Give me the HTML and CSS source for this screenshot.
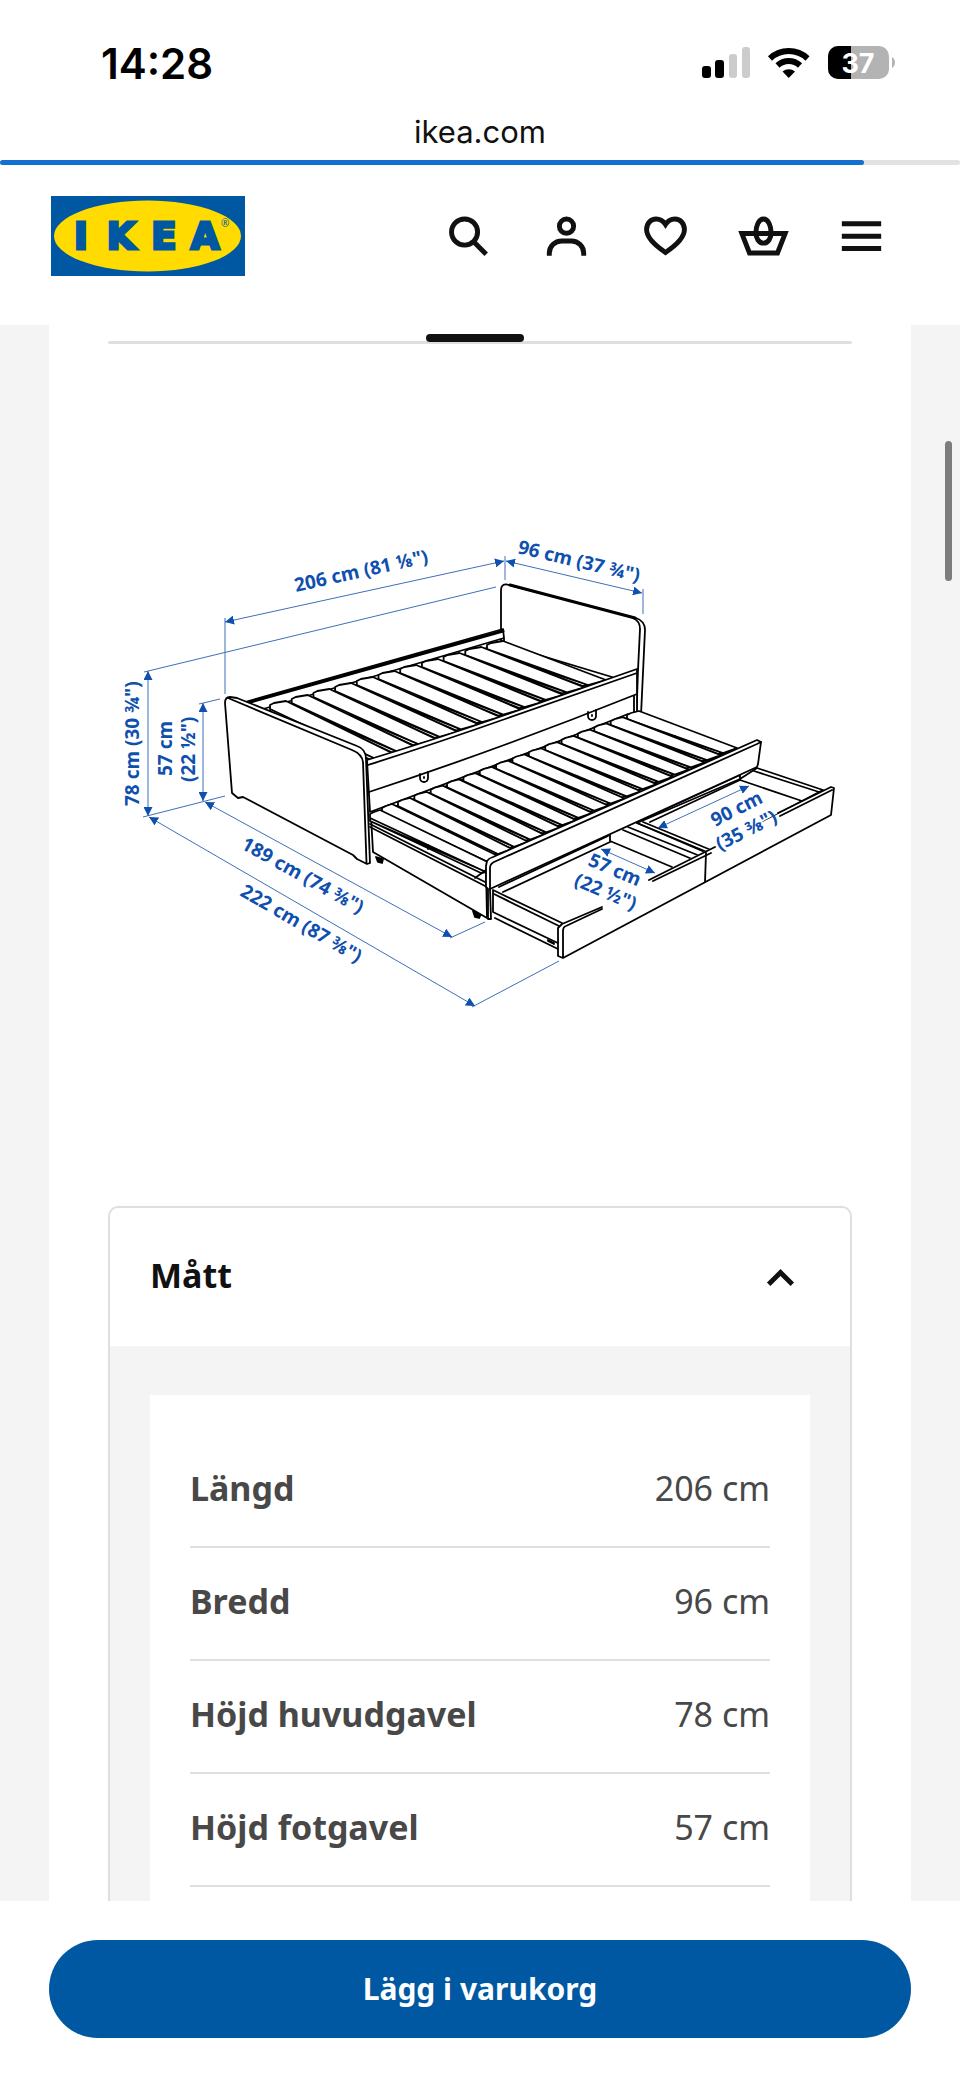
FILE: index.html
```html
<!DOCTYPE html>
<html lang="sv">

<head>
    <meta charset="UTF-8">
    <meta name="viewport" content="width=device-width, initial-scale=1.0">
    <title>IKEA - Mått</title>
    <link rel="stylesheet" href="styles.css">
</head>

<body>
    <div class="status">
        <span class="time">14:28</span>
        <svg class="status-icons" width="196" height="40" viewBox="700 44 196 40" aria-hidden="true">
            <rect x="702" y="67" width="9" height="12" rx="3" />
            <rect x="715" y="61" width="9" height="18" rx="3" />
            <rect x="729" y="55" width="8" height="24" rx="3" fill="#ccc" />
            <rect x="742" y="48" width="8" height="31" rx="3" fill="#ccc" />
            <g fill="none" stroke="#000" stroke-width="6">
                <path d="M770 59.500a27.500 27.500 0 0 1 37.500 0" />
                <path d="M777.500 66.500a16.500 16.500 0 0 1 22.500 0" />
            </g>
            <path d="M782.500 72.500a9.500 9.500 0 0 1 12.500 0l-6.300 6.500z" />
            <rect x="828" y="47" width="61" height="33" rx="10" fill="#b3b3b3" />
            <path d="M851 47h-13a10 10 0 0 0-10 10v13a10 10 0 0 0 10 10h13z" />
            <path d="M892 58q3 2 3 5.500t-3 5.500z" fill="#b3b3b3" />
            <text class="battery" x="858" y="74" text-anchor="middle">37</text>
        </svg>
    </div>
    <div class="url">ikea.com</div>
    <div class="progress"><div class="progress-bar"></div></div>

    <header class="header">
        <a href="#" class="logo" aria-label="IKEA">
            <svg width="194" height="80" viewBox="51 196 194 80">
                <rect x="51" y="196" width="194" height="80" fill="#0058a3" />
                <ellipse cx="147.500" cy="236" rx="93.500" ry="35.500" fill="#ffdb00" />
                <g class="logo-text" text-anchor="middle">
                    <text x="81" y="249">I</text>
                    <text x="121" y="249">K</text>
                    <text x="164" y="249">E</text>
                    <text x="205" y="249">A</text>
                </g>
                <text class="logo-reg" x="221" y="227">®</text>
            </svg>
        </a>
        <nav class="nav">
            <button type="button" aria-label="Sök">
                <svg class="icon" viewBox="0 0 24 24"><circle cx="10.400" cy="10.200" r="5.300" /><path d="M14 14l5.200 5.200" /></svg>
            </button>
            <button type="button" aria-label="Logga in">
                <svg class="icon" viewBox="0 0 24 24"><circle cx="12" cy="7.800" r="2.900" /><path d="M5 19.800v-1a5 5 0 0 1 5-5h4a5 5 0 0 1 5 5v1" /></svg>
            </button>
            <button type="button" aria-label="Favoriter">
                <svg class="icon" viewBox="0 0 24 24"><path d="M12 18.500c-3-2-7.700-5.400-7.700-9.300 0-2.500 1.700-4.300 3.900-4.300 1.600 0 2.900.8 3.800 2.200.9-1.400 2.200-2.200 3.800-2.200 2.200 0 3.900 1.800 3.900 4.300 0 3.900-4.700 7.300-7.700 9.300z" /></svg>
            </button>
            <button type="button" aria-label="Varukorg">
                <svg class="icon" viewBox="0 0 24 24"><path d="M3.200 10.800h17.600l-3.100 7.900H6.300z" /><path d="M12 4.900c2 0 3.100 3 3.100 5.600 0 2.200-1.200 4.200-3.100 4.200s-3.100-2-3.100-4.200c0-2.600 1.100-5.600 3.100-5.600z" /></svg>
            </button>
            <button type="button" aria-label="Meny">
                <svg class="icon" viewBox="0 0 24 24"><path d="M4 6.800h16M4 11.900h16M4 16.900h16" /></svg>
            </button>
        </nav>
    </header>

    <main class="main">
        <div class="product">
            <div class="slider"><div class="slider-thumb"></div></div>

            <svg class="drawing" viewBox="108 344 744 862" role="img" aria-label="Måttskiss">
                <defs>
                    <marker id="arrow" viewBox="0 0 8 8" refX="8" refY="4" markerWidth="9" markerHeight="9" markerUnits="userSpaceOnUse" orient="auto-start-reverse">
                        <path d="M0 0L8 4L0 8z" />
                    </marker>
                </defs>

                <g class="bed">
                    <!-- headboard and back rail -->
                    <path d="M501 646V590q0-6 6-5.500L636 618q9 3 9 12L641 715H501z" />
                    <path class="thick" d="M510 585L635 618" />
                    <path class="open" d="M633 618q7 3 7 11L638 670L636.500 714" />
                    <path d="M245 702L503 629L504 638L263 709z" />
                    <path class="thick" d="M247 703L503 631" />
                    <path class="open" d="M504 639V643L268 711M502 644L612 677" />
                    <g id="topSlats"></g>
                    <!-- front rail -->
                    <path d="M367 760Q440 738 508 714L637 669V712L370 812z" />
                    <path class="open" d="M368 765Q440 742 508 718L637 673M369 792Q500 749 637 694M634 696V713" />
                    <path class="open" d="M420 774v4a4 4 0 0 0 8 0v-6M588 712v4a4 4 0 0 0 8 0v-6M424 777v1M592 715v1" />
                    <!-- trundle bed -->
                    <path class="solid" d="M376 857l2 5 4 1 1-4zM473 911l2 6 4 1 2-4z" />
                    <path d="M371 816L628 714L735 748L486 868L487 918L373 852z" />
                    <g id="lowSlats"></g>
                    <path class="open" d="M486 870L475 878M370 824L487 883M370 827L487 887" />
                    <!-- drawers behind the trundle front -->
                    <path d="M757 768L823 790L802 801L707 853L637 823L740 779z" />
                    <path class="open" d="M754 771L819 792M740 772V780L802 801M740 780L650 822M740 775L642 820M637 823L707 852M643 822L711 850M628 827L700 856M623 830L692 859M610 835V841L672 867M610 842L503 892M608 836L499 887" />
                    <path d="M493 890L562 923V945L493 912z" />
                    <path class="open" d="M494 894L559 926M495 918L558 949" />
                    <path class="solid" d="M548 940l6 3v1l-6-3z" />
                    <path d="M487 861q2-3 6-4L757 740L761 742L758 764L757 767L490 889L491 919L488 919L488 889L486 887V866z" />
                    <path class="open" d="M490 889L490 868q0-4 4-6L757 744L761 742" />
                    <!-- drawer fronts -->
                    <path class="face" d="M558 927L562 924L831 787L834 788L831 815L563 958L559 957z" />
                    <path class="open" d="M602 907L562 924L558 928V956L563 958L831 815L834 788L831 787L778 813M602 909L566 926q-3 1-3 5V958M649 880L715 847M653 881L711 853M706 853L705 882M780 816L832 790" />
                    <!-- footboard -->
                    <path d="M225 703q0-6 5-6l7 1L357 746q9 3 9 13L370 863L367 864L357 859L353 855L243 797L238 798L232 793z" />
                    <path class="open" d="M228 698L352 750q10 4 11 12L366.500 863" />
                </g>

                <g class="lines">
                    <path d="M225 618V694M505 556V580M643 589V614M144 672L496 587M199 704L220 699M143 817L225 796M450 938L485 922M472 1007L559 961" />
                    <g marker-start="url(#arrow)" marker-end="url(#arrow)">
                        <path d="M225 622L504 561" />
                        <path d="M506 561L642 593" />
                        <path d="M148 671V816" />
                        <path d="M203 703V801" />
                        <path d="M205 802L452 937" />
                        <path d="M149 817L475 1006" />
                        <path d="M658 828L749 786" />
                        <path d="M601 849L655 873" />
                    </g>
                </g>

                <g class="labels">
                    <text transform="translate(296 592) rotate(-12.500)">206 cm (81 ⅛")</text>
                    <text transform="translate(517 553) rotate(13.500)">96 cm (37 ¾")</text>
                    <text transform="translate(139 806) rotate(-90)">78 cm (30 ¾")</text>
                    <text transform="translate(172 776) rotate(-90)">57 cm</text>
                    <text transform="translate(195 782) rotate(-90)">(22 ½")</text>
                    <text transform="translate(240 848) rotate(29)">189 cm (74 ⅜")</text>
                    <text transform="translate(239 895) rotate(30)">222 cm (87 ⅜")</text>
                    <text transform="translate(715 827) rotate(-27)">90 cm</text>
                    <text transform="translate(720 851) rotate(-27)">(35 ⅜")</text>
                    <text transform="translate(587 865) rotate(23)">57 cm</text>
                    <text transform="translate(573 885) rotate(23)">(22 ½")</text>
                </g>
            </svg>

            <section class="card">
                <button type="button" class="card-header" aria-expanded="true">
                    <span>Mått</span>
                    <svg class="icon" viewBox="0 0 24 24"><path d="M7.200 16L12 11.200l4.800 4.800" /></svg>
                </button>
                <div class="card-body">
                    <div class="card-inner">
                        <table class="sizes">
                            <tr><th scope="row">Längd</th><td>206 cm</td></tr>
                            <tr><th scope="row">Bredd</th><td>96 cm</td></tr>
                            <tr><th scope="row">Höjd huvudgavel</th><td>78 cm</td></tr>
                            <tr><th scope="row">Höjd fotgavel</th><td>57 cm</td></tr>
                        </table>
                    </div>
                </div>
            </section>
        </div>
        <div class="scroll-thumb"></div>
    </main>

    <footer class="footer">
        <button type="button" class="buy">Lägg i varukorg</button>
    </footer>

    <script src="script.js"></script>
</body>

</html>
```
FILE: styles.css
```css
* {
    box-sizing: border-box;
}

body {
    margin: 0;
    height: 100vh;
    display: flex;
    flex-direction: column;
    background-color: #fff;
    color: #111;
    font-family: "Noto Sans", sans-serif;
}

button {
    padding: 0;
    border: none;
    background: none;
    color: inherit;
    font-family: inherit;
    cursor: pointer;
}

.status {
    display: flex;
    justify-content: space-between;
    align-items: center;
    padding: 38px 64px 0 101px;
    color: #000;
    font-family: Inter, sans-serif;
}

.status-icons {
    margin-bottom: 2px;
}

.time {
    font-size: 42px;
    line-height: 52px;
    font-weight: 600;
}

.battery {
    fill: #fff;
    font-size: 27px;
    font-weight: 700;
}

.url {
    padding: 22px 0 8px;
    text-align: center;
    font-family: Inter, sans-serif;
    font-size: 31px;
    line-height: 40px;
}

.progress {
    height: 5px;
    flex-shrink: 0;
    border-radius: 3px;
    background-color: #e2e2e4;
}

.progress-bar {
    width: 90%;
    height: 5px;
    border-radius: 3px;
    background-color: #156fd0;
}

.header {
    display: flex;
    justify-content: space-between;
    align-items: center;
    padding: 31px 49px 49px 51px;
}

.logo,
.logo svg {
    display: block;
}

.logo-text {
    fill: #0058a3;
    stroke: #0058a3;
    stroke-width: 3;
    font-family: "DejaVu Sans", sans-serif;
    font-size: 37px;
    font-weight: bold;
}

.logo-reg {
    fill: #0058a3;
    font-size: 10px;
}

.nav {
    display: flex;
    width: 492px;
}

.nav button {
    flex: 1;
    display: flex;
    justify-content: center;
}

.icon {
    width: 59px;
    height: 59px;
    fill: none;
    stroke: #111;
    stroke-width: 2;
}

.main {
    position: relative;
    flex: 1;
    min-height: 0;
    overflow: hidden;
    padding: 0 49px;
    background-color: #f4f4f4;
}

.product {
    padding: 16px 59px 0;
    background-color: #fff;
}

.slider {
    position: relative;
    height: 3px;
    border-radius: 2px;
    background-color: #dfdfdf;
}

.slider-thumb {
    position: absolute;
    left: 318px;
    bottom: 2px;
    width: 98px;
    height: 8px;
    border-radius: 4px;
    background-color: #111;
}

.drawing {
    display: block;
    width: 100%;
}

.bed path {
    fill: #fff;
    stroke: #000;
    stroke-width: 1.8;
    stroke-linejoin: round;
    stroke-linecap: round;
}

.bed .open {
    fill: none;
}

.bed .thick {
    fill: none;
    stroke-width: 3;
}

.bed .solid {
    fill: #000;
}

.bed .face {
    stroke: none;
}

.lines path {
    fill: none;
    stroke: #3f6fb8;
    stroke-width: 1;
}

.drawing marker path,
.labels {
    fill: #0f4fae;
}

.labels {
    font-size: 19px;
    font-weight: 700;
}

.card {
    border: 2px solid #dfdfdf;
    border-radius: 10px;
    overflow: hidden;
}

.card-header {
    display: flex;
    justify-content: space-between;
    align-items: center;
    width: 100%;
    padding: 37px 40px 42px;
    font-size: 34px;
    line-height: 46px;
    font-weight: 700;
}

.card-body {
    padding: 49px 40px;
    background-color: #f4f4f4;
}

.card-inner {
    padding: 40px;
    background-color: #fff;
}

.sizes {
    width: 100%;
    border-collapse: collapse;
    color: #484848;
    font-size: 34px;
    line-height: 46px;
}

.sizes th,
.sizes td {
    padding: 30px 0 35px;
    border-bottom: 2px solid #dfdfdf;
    text-align: left;
}

.sizes td {
    text-align: right;
}

.scroll-thumb {
    position: absolute;
    top: 116px;
    right: 8px;
    width: 7px;
    height: 140px;
    border-radius: 4px;
    background-color: #7d7d7d;
}

.footer {
    padding: 39px 49px 40px;
    background-color: #fff;
}

.buy {
    display: block;
    width: 100%;
    padding: 29px 0;
    border-radius: 49px;
    background-color: #0058a3;
    color: #fff;
    font-size: 30px;
    line-height: 40px;
    font-weight: 700;
}
```
FILE: script.js
```js
// draws one slat: notch at the back end, front edge and its thickness
const slat = (bx, by, fx, fy, pitch) => {
    const h = 3;
    let d = `M${bx} ${by + h}V${by - 4}L${bx + 4} ${by - 6}L${bx + pitch - 4} ${by - 8}`;
    d += `L${fx + pitch - 2} ${fy - 5}L${fx} ${fy}z`;
    d += `M${bx} ${by}L${fx} ${fy}L${fx - 5} ${fy + 1}L${bx} ${by + h}`;
    return `<path d="${d}" />`;
};

const drawSlats = (id, count, back, front, pitch, tick) => {
    let out = '';
    for (let i = 0; i < count; i++) {
        const t = i / (count - 1);
        const bx = back[0] + (back[2] - back[0]) * t;
        const by = back[1] + (back[3] - back[1]) * t;
        const fx = front[0] + (front[2] - front[0]) * t;
        const fy = front[1] + (front[3] - front[1]) * t;
        out += slat(bx, by, fx, fy, pitch);
        if (tick) {
            out += `<path d="M${(bx + fx) / 2} ${(by + fy) / 2}v4" />`;
        }
    }
    document.getElementById(id).innerHTML += out;
};

drawSlats('topSlats', 11, [487, 649, 270, 709], [588, 685, 376, 759], 20, false);
drawSlats('lowSlats', 15, [627, 719, 398, 806], [723, 753, 498, 854], 16, true);
// the last two slats meet the left end of the rail
drawSlats('lowSlats', 2, [382, 812, 370, 818], [488, 862, 486, 872], 14, true);
```
